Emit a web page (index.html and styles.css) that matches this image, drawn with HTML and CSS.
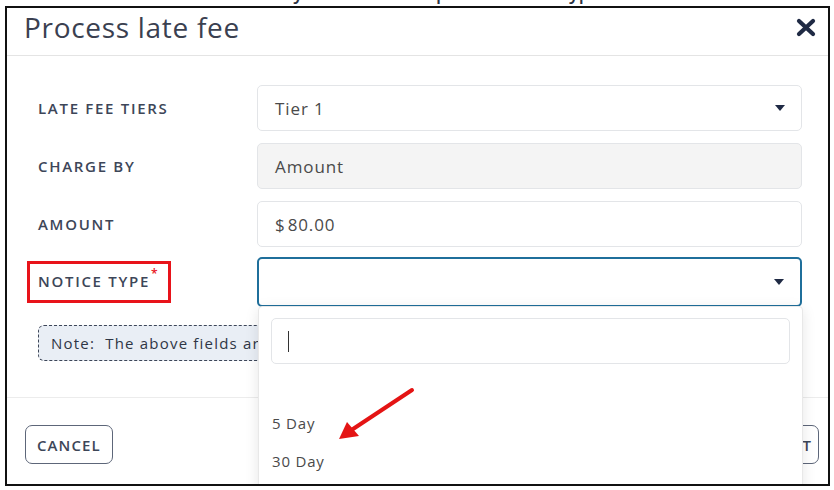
FILE: index.html
```html
<!DOCTYPE html>
<html lang="en">
<head>
    <meta charset="UTF-8">
    <meta name="viewport" content="width=device-width, initial-scale=1.0">
    <title>Process late fee</title>
    <link rel="stylesheet" href="styles.css">
</head>
<body>
    <div class="caption"><span>Now try to select the specific Notice type</span></div>

    <div class="frame">
        <div class="modal-header">
            <h2>Process late fee</h2>
            <svg class="close" width="20" height="19" viewBox="0 0 20 19">
                <path d="M3 3 L17 16 M17 3 L3 16" stroke="#1f2a44" stroke-width="4.2" stroke-linecap="round"/>
            </svg>
        </div>

        <div class="modal-body">
            <div class="row">
                <label>LATE FEE TIERS</label>
                <div class="field">Tier 1<span class="caret"></span></div>
            </div>
            <div class="row">
                <label>CHARGE BY</label>
                <div class="field disabled">Amount</div>
            </div>
            <div class="row">
                <label>AMOUNT</label>
                <div class="field">$<span class="amount">80.00</span></div>
            </div>
            <div class="row">
                <label class="marked">NOTICE TYPE<sup>*</sup></label>
                <div class="field focused"><span class="caret"></span></div>
            </div>
            <div class="note">Note:&nbsp; The above fields are required to process the late fee for this tenant.</div>
        </div>

        <div class="modal-footer">
            <button class="btn">CANCEL</button>
            <button class="btn submit">SUBMIT</button>
        </div>

        <!-- open select menu -->
        <div class="menu">
            <div class="search"><span class="cursor"></span></div>
            <ul>
                <li class="blank"></li>
                <li>5 Day</li>
                <li>30 Day</li>
            </ul>
        </div>

        <svg class="pointer" width="90" height="60" viewBox="0 0 90 60">
            <line x1="76" y1="4" x2="14" y2="45" stroke="#e41414" stroke-width="4" stroke-linecap="round"/>
            <polygon points="3,53 11,36 23,50" fill="#e41414"/>
        </svg>
    </div>
</body>
</html>
```

FILE: styles.css
```css
body {
    margin: 0;
    background-color: white;
    font-family: "Open Sans", Arial, sans-serif;
    color: #3d4658;
}
.caption {
    height: 6px;
    overflow: hidden;
    padding-left: 232px;
}
.caption span {
    display: block;
    margin-top: -19px;
    font-size: 18px;
    font-weight: 600;
    line-height: 24px;
    color: #2b3242;
    word-spacing: 2px;
}
.frame {
    position: relative;
    width: 821px;
    height: 476px;
    margin-left: 5px;
    border: 2px solid #111;
    overflow: hidden;
    background-color: white;
}
.modal-header {
    display: flex;
    align-items: center;
    justify-content: space-between;
    height: 38px;
    padding: 0 12px 9px 17px;
    border-bottom: 1px solid #e4e4e4;
}
.modal-header h2 {
    margin: 0;
    font-size: 28px;
    font-weight: 400;
    color: #3a4050;
    letter-spacing: 0.7px;
}
.modal-body {
    padding: 29px 26px 36px 31px;
    border-bottom: 1px solid #ececec;
}
.row {
    display: flex;
    align-items: center;
    margin-bottom: 12px;
}
.row label {
    width: 219px;
    font-size: 15px;
    font-weight: 600;
    letter-spacing: 1.7px;
    color: #3d4658;
}
.row label.marked {
    position: relative;
    top: -2px;
}
.row label.marked::before {
    content: "";
    position: absolute;
    left: -11px;
    top: -10px;
    width: 138px;
    height: 36px;
    border: 3px solid #e8131a;
}
.row label sup {
    position: relative;
    top: -3px;
    line-height: 0;
    color: #e8131a;
    font-size: 12px;
    margin-left: 1px;
}
.field {
    flex: 1;
    display: flex;
    align-items: center;
    height: 44px;
    padding: 0 17px;
    border: 1px solid #e3e5e8;
    border-radius: 5px;
    font-size: 17px;
    color: #4a4a4a;
    letter-spacing: 0.9px;
}
.field.disabled {
    background-color: #f4f4f4;
}
.amount {
    margin-left: 2px;
}
.field.focused {
    height: 46px;
    margin-top: -2px;
    border: 2px solid #1f6f9b;
}
.caret {
    margin-left: auto;
    margin-right: -1px;
    border-left: 5px solid transparent;
    border-right: 5px solid transparent;
    border-top: 6px solid #1f2a44;
}
.note {
    margin-top: 18px;
    height: 34px;
    line-height: 34px;
    padding-left: 12px;
    border: 1px dashed #3d4658;
    border-radius: 6px;
    background-color: #e9eef5;
    font-size: 15px;
    font-weight: 500;
    letter-spacing: 1.2px;
    color: #2f3645;
    white-space: nowrap;
    overflow: hidden;
}
.modal-footer {
    display: flex;
    justify-content: space-between;
    padding: 27px 9px 0 18px;
}
.btn {
    height: 39px;
    padding: 0 11px;
    border: 1.5px solid #5d6679;
    border-radius: 7px;
    background-color: white;
    font-family: "Open Sans", Arial, sans-serif;
    font-size: 15px;
    font-weight: 600;
    letter-spacing: 1.1px;
    color: #3d4658;
}
.btn.submit {
    padding-right: 6px;
}
.menu {
    position: absolute;
    left: 251px;
    top: 298px;
    width: 543px;
    height: 200px;
    background-color: white;
    border: 1px solid #e8e8e8;
    border-radius: 4px;
    box-shadow: 0 3px 14px rgba(0,0,0,0.1);
}
.search {
    display: flex;
    align-items: center;
    height: 44px;
    margin: 11px 12px 0 12px;
    padding-left: 16px;
    border: 1px solid #e3e5e8;
    border-radius: 5px;
}
.cursor {
    width: 0;
    height: 21px;
    border-left: 1.5px solid #333;
}
.menu ul {
    list-style: none;
    margin: 2px 0 0 0;
    padding: 0;
}
.menu li {
    height: 38px;
    line-height: 38px;
    padding-left: 13px;
    font-size: 15px;
    font-weight: 500;
    letter-spacing: 0.8px;
    color: #4a4a4a;
}
.pointer {
    position: absolute;
    left: 329px;
    top: 378px;
}
```
